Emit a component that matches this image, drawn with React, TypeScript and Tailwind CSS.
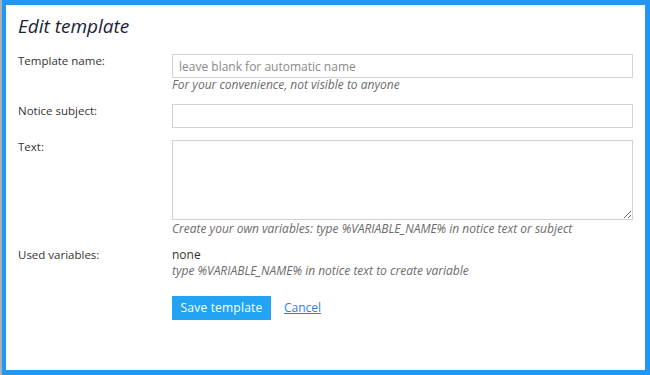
import React from "react";

const font = { fontFamily: '"Open Sans", "Noto Sans", sans-serif' };

export default function App() {
  return (
    <div className="flex h-[375px] w-[650px] bg-white" style={font}>
      {/* page behind the dialog */}
      <div className="w-[2px] bg-[#aab0b5]" />
      <div className="flex-1 border-solid border-[#2196f3] border-t-[5px] border-r-[5px] border-b-[5px] border-l-[4px] bg-white">
        <div className="pl-[12px] pt-[8px]">
          <h1 className="text-[19px] leading-[26px] italic text-[#1c2238]">Edit template</h1>

          <div className="mt-[15px] grid grid-cols-[154px_461px] text-[12px] leading-[14px] text-[#333]">
            {/* Template name */}
            <label className="text-[11.5px]">Template name:</label>
            <div>
              <input
                className="block h-[24px] w-full border border-[#d2d2d2] px-[6px] text-[12px] text-[#333] placeholder:text-[#8a8a8a] outline-none"
                placeholder="leave blank for automatic name"
              />
              <p className="italic text-[#6b6b6b]">For your convenience, not visible to anyone</p>
            </div>

            {/* Notice subject */}
            <label className="mt-[12px] text-[11.5px]">Notice subject:</label>
            <div className="mt-[12px]">
              <input className="block h-[24px] w-full border border-[#d2d2d2] px-[6px] text-[12px] outline-none" />
            </div>

            {/* Text */}
            <label className="mt-[12px] text-[11.5px]">Text:</label>
            <div className="mt-[12px]">
              <textarea className="block h-[80px] w-full border border-[#d2d2d2] px-[6px] text-[12px] outline-none" />
              <p className="mt-[2px] italic text-[#6b6b6b]">
                Create your own variables: type %VARIABLE_NAME% in notice text or subject
              </p>
            </div>

            {/* Used variables */}
            <label className="mt-[12px] text-[11.5px]">Used variables:</label>
            <div className="mt-[12px]">
              <p>none</p>
              <p className="mt-[2px] italic text-[#6b6b6b]">type %VARIABLE_NAME% in notice text to create variable</p>
            </div>

            <div />
            <div className="mt-[18px] flex items-center gap-[13px]">
              <button className="h-[24px] w-[99px] bg-[#22a4f2] text-[12px] tracking-[0.2px] text-white">Save template</button>
              <a href="#" className="text-[12px] text-[#2b7fe0] underline">Cancel</a>
            </div>
          </div>
        </div>
      </div>
    </div>
  );
}
